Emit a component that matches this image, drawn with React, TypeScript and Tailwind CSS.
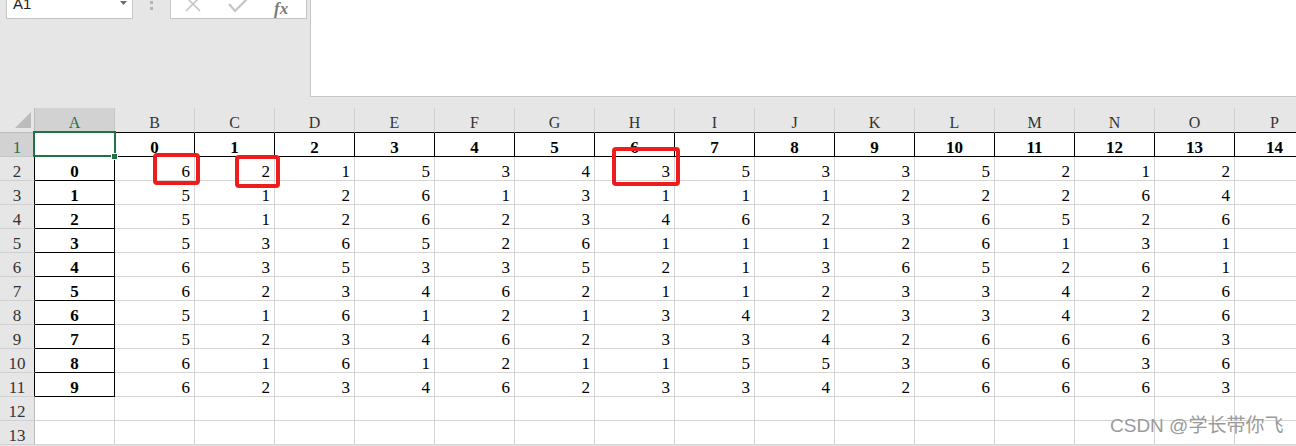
const columns = ["A", "B", "C", "D", "E", "F", "G", "H", "I", "J", "K", "L", "M", "N", "O", "P"];

const rows = [
  [6, 2, 1, 5, 3, 4, 3, 5, 3, 3, 5, 2, 1, 2],
  [5, 1, 2, 6, 1, 3, 1, 1, 1, 2, 2, 2, 6, 4],
  [5, 1, 2, 6, 2, 3, 4, 6, 2, 3, 6, 5, 2, 6],
  [5, 3, 6, 5, 2, 6, 1, 1, 1, 2, 6, 1, 3, 1],
  [6, 3, 5, 3, 3, 5, 2, 1, 3, 6, 5, 2, 6, 1],
  [6, 2, 3, 4, 6, 2, 1, 1, 2, 3, 3, 4, 2, 6],
  [5, 1, 6, 1, 2, 1, 3, 4, 2, 3, 3, 4, 2, 6],
  [5, 2, 3, 4, 6, 2, 3, 3, 4, 2, 6, 6, 6, 3],
  [6, 1, 6, 1, 2, 1, 1, 5, 5, 3, 6, 6, 3, 6],
  [6, 2, 3, 4, 6, 2, 3, 3, 4, 2, 6, 6, 6, 3],
];

function FormulaBar() {
  return (
    <div className="flex h-[108px] items-start">
      {/* name box */}
      <div className="-mt-[6px] ml-[6px] flex h-[25px] w-[127px] shrink-0 items-start justify-between border border-[#c6c6c6] bg-white pl-[6px] pr-[5px] pt-[1px]">
        <span className="font-['Liberation_Sans',sans-serif] text-[15px] leading-none text-[#222]">A1</span>
        <svg width="7" height="4" viewBox="0 0 7 4" className="mt-[5px]">
          <path d="M0 0H7L3.5 4Z" fill="#6b6b6b" />
        </svg>
      </div>

      {/* grip dots */}
      <div className="flex w-[37px] shrink-0 flex-col items-center gap-[3px] pt-[1px]">
        <div className="h-[3px] w-[3px] bg-[#b4b4b4]" />
        <div className="h-[3px] w-[3px] bg-[#b4b4b4]" />
      </div>

      {/* cancel / enter / fx */}
      <div className="-mt-[6px] flex h-[25px] w-[137px] shrink-0 items-end border border-[#c6c6c6] bg-white pb-[9px]">
        <svg width="16" height="16" viewBox="0 0 16 16" className="mb-[-3px] ml-[14px]">
          <path d="M1 1L15 15M15 1L1 15" stroke="#c4c4c4" strokeWidth="1.6" fill="none" />
        </svg>
        <svg width="20" height="14" viewBox="0 0 20 14" className="mb-[-4px] ml-[27px]">
          <path d="M1 5L7 12L19 0" stroke="#c4c4c4" strokeWidth="2.2" fill="none" />
        </svg>
        <span className="mb-[-8px] ml-[26px] font-['Liberation_Serif',serif] text-[17px] font-bold italic leading-none text-[#7a7a7a]">
          fx
        </span>
      </div>

      {/* formula input */}
      <div className="ml-[3px] h-[97px] flex-1 border-b border-l border-[#c6c6c6] bg-white" />
    </div>
  );
}

function HeaderRow() {
  return (
    <div className="flex h-[25px]">
      <div className="relative w-[35px] shrink-0 border-b border-r border-[#bcbcbc] bg-[#e6e6e6]">
        <svg width="17" height="17" viewBox="0 0 17 17" className="absolute left-[15px] top-[4px]">
          <path d="M16 0V16H0Z" fill="#bcbcbc" />
        </svg>
      </div>
      {columns.map((c) =>
        c === "A" ? (
          <div
            key={c}
            className="flex w-[80px] shrink-0 items-end justify-center border-b border-r border-b-[#217346] border-r-[#c6c6c6] bg-[#d2d2d2] pb-[1px] leading-none text-[#217346]"
          >
            {c}
          </div>
        ) : (
          <div
            key={c}
            className="flex w-[80px] shrink-0 items-end justify-center border-b border-r border-b-black border-r-[#d0d0d0] bg-[#e6e6e6] pb-[1px] leading-none text-[#333]"
          >
            {c}
          </div>
        ),
      )}
    </div>
  );
}

function TitleRow() {
  return (
    <div className="flex h-[24px] text-[17px]">
      <div className="flex w-[35px] shrink-0 items-end justify-center border-b border-r border-b-[#c6c6c6] border-r-[#bcbcbc] bg-[#d2d2d2] leading-none text-[#217346]">
        1
      </div>
      <div className="w-[80px] shrink-0 border-b border-r border-black bg-white" />
      {columns.slice(1).map((c, i) => (
        <div
          key={c}
          className="flex w-[80px] shrink-0 items-end justify-center border-b border-r border-black bg-white font-bold leading-none text-black"
        >
          {i}
        </div>
      ))}
    </div>
  );
}

function DataRow({ index, values }: { index: number; values: number[] }) {
  return (
    <div className="flex h-[24px] text-[17px]">
      <div className="flex w-[35px] shrink-0 items-end justify-center border-b border-r border-b-[#d0d0d0] border-r-black bg-[#e6e6e6] leading-none text-[#333]">
        {index + 2}
      </div>
      <div className="flex w-[80px] shrink-0 items-end justify-center border-b border-r border-black bg-white font-bold leading-none text-black">
        {index}
      </div>
      {values.map((v, i) => (
        <div
          key={i}
          className="flex w-[80px] shrink-0 items-end justify-end border-b border-r border-[#d4d4d4] bg-white pr-[4px] leading-none text-black"
        >
          {v}
        </div>
      ))}
      <div className="w-[80px] shrink-0 border-b border-r border-[#d4d4d4] bg-white" />
    </div>
  );
}

function EmptyRow({ label }: { label: number }) {
  return (
    <div className="flex h-[24px] text-[17px]">
      <div className="flex w-[35px] shrink-0 items-end justify-center border-b border-r border-b-[#d0d0d0] border-r-[#bcbcbc] bg-[#e6e6e6] leading-none text-[#333]">
        {label}
      </div>
      {columns.map((c) => (
        <div key={c} className="w-[80px] shrink-0 border-b border-r border-[#d4d4d4] bg-white" />
      ))}
    </div>
  );
}

export default function App() {
  return (
    <div className="relative h-[446px] w-[1296px] overflow-hidden bg-[#e6e6e6] font-['Liberation_Serif',serif] text-[16px]">
      <FormulaBar />

      <div className="flex flex-col">
        <HeaderRow />
        <TitleRow />
        {rows.map((values, i) => (
          <DataRow key={i} index={i} values={values} />
        ))}
        <EmptyRow label={12} />
        <EmptyRow label={13} />
      </div>

      {/* active cell A1 */}
      <div className="absolute left-[33px] top-[131px] h-[26px] w-[83px] border-2 border-[#217346]" />
      <div className="absolute left-[111px] top-[153px] h-[7px] w-[7px] border border-white bg-[#217346]" />

      {/* red annotation boxes */}
      <div className="absolute left-[153px] top-[153px] h-[32px] w-[47px] rounded-[4px] border-4 border-[#ee1c1c]" />
      <div className="absolute left-[235px] top-[155px] h-[33px] w-[45px] rounded-[4px] border-4 border-[#ee1c1c]" />
      <div className="absolute left-[612px] top-[147px] h-[39px] w-[68px] rounded-[4px] border-4 border-[#ee1c1c]" />

      <div className="absolute left-[1110px] top-[416px] font-['Liberation_Sans','Noto_Sans_CJK_SC',sans-serif] text-[19px] leading-none text-[#9a9a9a] [text-shadow:0_0_1px_#fff]">
        CSDN @学长带你飞
      </div>
    </div>
  );
}
